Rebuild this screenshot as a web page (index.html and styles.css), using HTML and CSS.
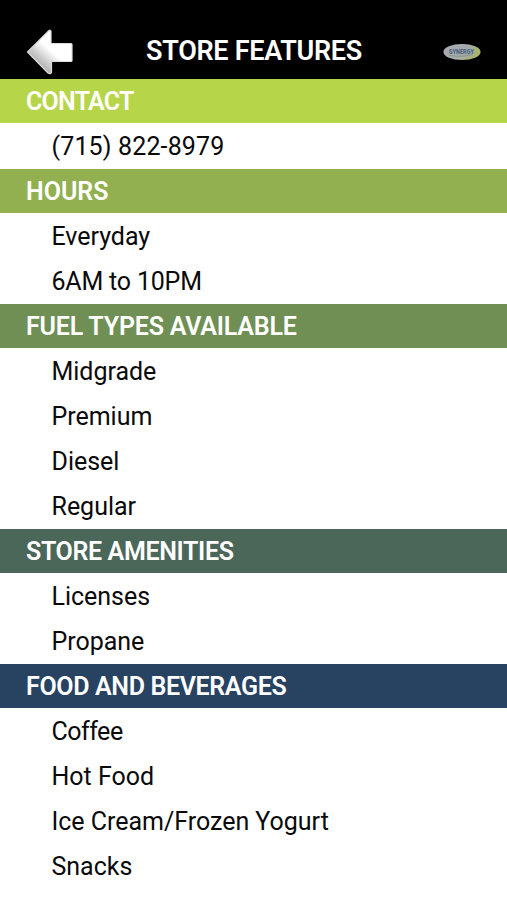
FILE: index.html
```
<!DOCTYPE html>
<html>
    <head>
        <meta charset="utf-8" />
        <meta name="viewport" content="width=device-width, initial-scale=1">
        <title>Store Features</title>
        <link rel="stylesheet" href="styles.css">
    </head>
    <body>
        <div class="topbar">
            <svg class="back" width="50" height="50" viewBox="0 0 50 50">
                <defs>
                    <linearGradient id="shine" x1="0.1" y1="0.85" x2="0.55" y2="0.35">
                        <stop offset="0" stop-color="#999" />
                        <stop offset="0.45" stop-color="#ccc" />
                        <stop offset="0.85" stop-color="#fff" />
                    </linearGradient>
                </defs>
                <path d="M3.5 25 L25 3.5 Q27 2.5 27 5 V16.5 H47 Q48 16.5 48 17.5 V33.5 Q48 34.5 47 34.5 H27.5 V45.5 Q26.5 47.5 24 46 Z" fill="url(#shine)" stroke="#ddd" stroke-width="1.2" stroke-linejoin="round" />
            </svg>
            <h1>STORE FEATURES</h1>
            <svg class="logo" width="40" height="20" viewBox="0 0 40 20">
                <defs>
                    <linearGradient id="rim" x1="0" y1="0" x2="1" y2="0.4">
                        <stop offset="0.6" stop-color="#aaacb0" />
                        <stop offset="0.95" stop-color="#a9b669" />
                    </linearGradient>
                </defs>
                <ellipse cx="20" cy="10" rx="18.6" ry="8" fill="url(#rim)" />
                <ellipse cx="19.5" cy="9.8" rx="16" ry="6" fill="#a3a9ad" />
                <path d="M7 13.5 Q24 16 33 11" fill="none" stroke="#8b9b83" stroke-width="1" />
                <path d="M32 6 L35 9.5 L31.5 13" fill="none" stroke="#a9ba55" stroke-width="1.5" />
                <text x="7" y="12" textLength="25" lengthAdjust="spacingAndGlyphs">SYNERGY</text>
            </svg>
        </div>

        <div class="list">
            <h2 class="contact">CONTACT</h2>
            <p class="phone">(715) 822-8979</p>

            <h2 class="hours">HOURS</h2>
            <p>Everyday</p>
            <p class="time">6AM to 10PM</p>

            <h2 class="fuel">FUEL TYPES AVAILABLE</h2>
            <p>Midgrade</p>
            <p>Premium</p>
            <p>Diesel</p>
            <p>Regular</p>

            <h2 class="amenities">STORE AMENITIES</h2>
            <p>Licenses</p>
            <p>Propane</p>

            <h2 class="food">FOOD AND BEVERAGES</h2>
            <p class="coffee">Coffee</p>
            <p>Hot Food</p>
            <p>Ice Cream/Frozen Yogurt</p>
            <p>Snacks</p>
        </div>
    </body>
</html>
```

FILE: styles.css
```
body {
    margin: 0;
    background: #fff;
    font-family: Roboto, "Liberation Sans", sans-serif;
}
.topbar {
    display: flex;
    justify-content: space-between;
    align-items: center;
    box-sizing: border-box;
    height: 79px;
    padding: 24px 25px 0 24px;
    background: #000;
}
h1 {
    margin: 0 8px 2px 0;
    font-size: 27px;
    font-weight: 600;
    line-height: 32px;
    letter-spacing: -0.3px;
    color: #fff;
}
.logo text {
    font-size: 7px;
    font-weight: 900;
    fill: #52667e;
}
h2, p {
    box-sizing: border-box;
    height: 45px;
    margin: 0;
    line-height: 45px;
    white-space: nowrap;
}
h2 {
    padding-left: 26px;
    border-bottom: 1px solid #fff;
    font-size: 25px;
    font-weight: 600;
    line-height: 46px;
    letter-spacing: -0.35px;
    color: #fff;
}
p {
    padding-left: 51.5px;
    font-size: 25px;
    letter-spacing: -0.02px;
    color: #0a0a0a;
}
.contact {
    background: #b7d548;
    letter-spacing: -0.75px;
}
.hours {
    background: #92b050;
    letter-spacing: 0;
}
.fuel {
    background: #6f8f55;
    letter-spacing: -0.2px;
}
.amenities {
    background: #4b6759;
}
.food {
    background: #284262;
}
.phone {
    letter-spacing: 0.15px;
}
.time {
    letter-spacing: -0.2px;
}
.coffee {
    letter-spacing: -0.5px;
}
```
